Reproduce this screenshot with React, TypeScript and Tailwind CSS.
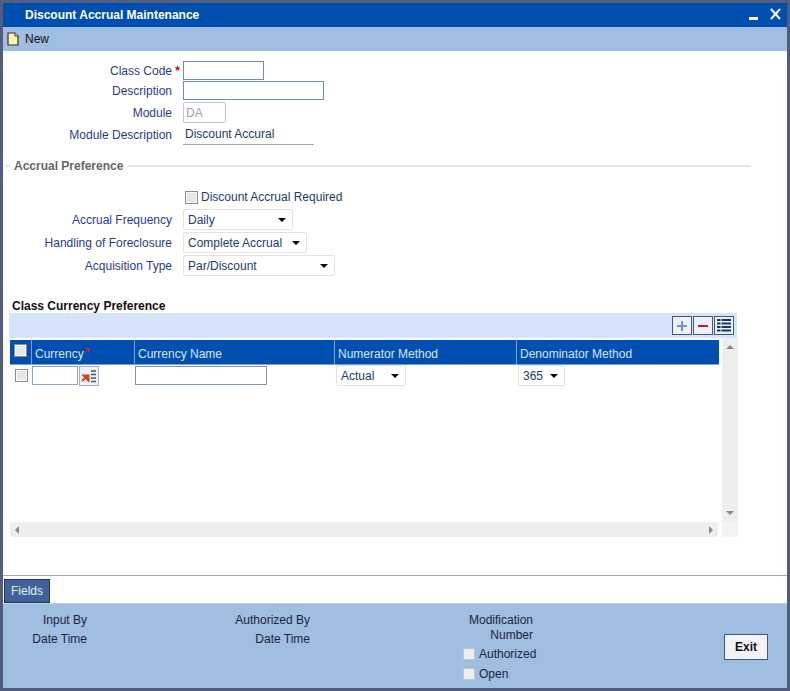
import React from "react";

const font = { fontFamily: '"Liberation Sans", Arial, sans-serif' };

function Caret() {
  return <span className="w-0 h-0 border-l-[4px] border-r-[4px] border-t-[4px] border-l-transparent border-r-transparent border-t-black" />;
}

function Select({ w, text, h = "h-[21px]" }: { w: string; text: string; h?: string }) {
  return (
    <div className={`${w} ${h} flex items-center justify-between pl-[4px] pr-[6px] bg-white border border-[#e3e3e3] rounded-[2px] text-[12px] text-[#1d3a6e]`}>
      <span>{text}</span>
      <Caret />
    </div>
  );
}

function Check({ cls = "" }: { cls?: string }) {
  return <span className={`block w-[13px] h-[13px] border border-[#8b8b8b] bg-[#e6e6e6] shadow-[inset_0_0_0_1px_#fff] ${cls}`} />;
}

function Row({ label, star, mt, children }: { label: string; star?: boolean; mt: string; children: React.ReactNode }) {
  return (
    <div className={`flex items-center ${mt}`}>
      <div className="w-[169px] text-right text-[12px] text-[#2b3a8f] leading-none">{label}</div>
      <div className="w-[11px] text-center text-[#cc0000] text-[12px] font-bold leading-none">{star ? "*" : ""}</div>
      {children}
    </div>
  );
}

function HeadCell({ w, children }: { w: string; children: React.ReactNode }) {
  return <div className={`${w} h-full flex items-center pl-[3px] pt-[3px] border-r border-[#7f9fd0] text-[12px] text-[#d6e6fb]`}>{children}</div>;
}

function LovIcon() {
  return (
    <svg width="20" height="20" viewBox="0 0 20 20">
      <rect x="0.5" y="0.5" width="19" height="19" fill="#f2f2f2" stroke="#9db0c8" />
      <path d="M3 15 L8 10 M4.5 9.5 H9.5 V14.5 Z" stroke="#d8401a" strokeWidth="2" fill="#d8401a" />
      <path d="M12 5 H17 M12 8.5 H17 M12 12 H17 M12 15.5 H17" stroke="#3c5a88" strokeWidth="1.5" />
    </svg>
  );
}

export default function App() {
  return (
    <div style={font} className="w-[790px] h-[691px] border-[3px] border-[#515c7e] bg-white flex flex-col overflow-hidden">
      <div className="h-[24px] shrink-0 bg-[#004fb0] flex items-center pl-[22px] pr-[5px]">
        <span className="text-white text-[12px] font-bold">Discount Accrual Maintenance</span>
        <svg className="ml-auto" width="36" height="16" viewBox="0 0 36 16">
          <rect x="3" y="10" width="9" height="3" fill="#fff" />
          <path d="M25 2 L34 12 M34 2 L25 12" stroke="#fff" strokeWidth="2" />
        </svg>
      </div>
      <div className="h-[24px] shrink-0 bg-[#a0bde2] flex items-center pl-[4px]">
        <svg width="12" height="14" viewBox="0 0 12 14">
          <path d="M1 1 H8 L11 4 V13 H1 Z" fill="#fdf3a6" stroke="#333" strokeWidth="1.2" />
          <path d="M8 1 V4 H11" fill="#fff" stroke="#333" />
        </svg>
        <span className="ml-[6px] text-[12px] text-[#111]">New</span>
      </div>

      <div className="flex-1 flex flex-col">
        <Row label="Class Code" star mt="mt-[10px]">
          <div className="w-[81px] h-[19px] border border-[#6f8fa3]" />
        </Row>
        <Row label="Description" mt="mt-[1px]">
          <div className="w-[141px] h-[19px] border border-[#6f8fa3]" />
        </Row>
        <Row label="Module" mt="mt-[2px]">
          <div className="w-[43px] h-[21px] border border-[#c4c4c4] rounded-[2px] pl-[2px] flex items-center text-[12px] text-[#a0a0a0]">DA</div>
        </Row>
        <Row label="Module Description" mt="mt-[1px]">
          <div className="w-[131px] h-[21px] border-b border-[#aaaaaa] pl-[2px] flex items-center text-[12px] text-[#1d3a6e]">Discount Accural</div>
        </Row>

        <div className="flex items-center mt-[13px] h-[16px] pl-[2px]">
          <span className="w-[5px] h-[2px] bg-[#dfe6f3]" />
          <span className="ml-[4px] text-[12px] font-bold text-[#666666]">Accrual Preference</span>
          <span className="ml-[4px] w-[624px] h-[2px] bg-[#dfe6f3]" />
        </div>

        <div className="flex items-center mt-[14px] ml-[182px]">
          <Check />
          <span className="ml-[3px] text-[12px] text-[#1d3a6e]">Discount Accrual Required</span>
        </div>
        <Row label="Accrual Frequency" mt="mt-[3px]"><Select w="w-[110px]" text="Daily" /></Row>
        <Row label="Handling of Foreclosure" mt="mt-[2px]"><Select w="w-[124px]" text="Complete Accrual" /></Row>
        <Row label="Acquisition Type" mt="mt-[2px]"><Select w="w-[152px]" text="Par/Discount" /></Row>

        <div className="mt-[22px] ml-[9px] h-[15px] flex items-center text-[12px] font-bold text-[#111]">Class Currency Preference</div>
        <div className="ml-[6px] w-[728px] h-[25px] bg-[#d5e4fa] flex items-center justify-end gap-[1px] pr-[3px]">
          <button className="w-[20px] h-[19px] border border-[#44597c] bg-[#eef2f8] flex items-center justify-center">
            <svg width="12" height="12" viewBox="0 0 12 12"><path d="M6 1 V11 M1 6 H11" stroke="#6f93cc" strokeWidth="2" /></svg>
          </button>
          <button className="w-[20px] h-[19px] border border-[#44597c] bg-[#eef2f8] flex items-center justify-center">
            <svg width="12" height="12" viewBox="0 0 12 12"><path d="M1 6 H11" stroke="#c01a2c" strokeWidth="2" /></svg>
          </button>
          <button className="w-[20px] h-[19px] border border-[#44597c] bg-[#eef2f8] flex items-center justify-center">
            <svg width="14" height="13" viewBox="0 0 14 13">
              <path d="M0 1 H14 M0 4.5 H14 M0 8 H14 M0 11.5 H14" stroke="#12386f" strokeWidth="2" />
              <path d="M4 0 V13" stroke="#eef2f8" />
            </svg>
          </button>
        </div>

        <div className="ml-[7px] flex w-[728px]">
          <div className="w-[712px] flex flex-col">
            <div className="h-[184px] pt-[2px]">
              <div className="w-[709px] h-[25px] bg-[#004fb0] border-b border-[#7f9fd0] flex items-stretch">
                <div className="w-[22px] border-r border-[#7f9fd0] flex items-center justify-center"><Check cls="mb-[3px]" /></div>
                <HeadCell w="w-[103px]">Currency<span className="text-[#cc2222] font-bold ml-[1px] -mt-[3px]">*</span></HeadCell>
                <HeadCell w="w-[200px]">Currency Name</HeadCell>
                <HeadCell w="w-[182px]">Numerator Method</HeadCell>
                <div className="flex-1 flex items-center pl-[3px] pt-[3px] text-[12px] text-[#d6e6fb]">Denominator Method</div>
              </div>
              <div className="w-[709px] h-[21px] flex items-center">
                <div className="w-[22px] flex justify-center"><Check /></div>
                <div className="w-[103px] flex items-center">
                  <div className="w-[46px] h-[19px] border border-[#8fa5bd]" />
                  <div className="ml-[1px]"><LovIcon /></div>
                </div>
                <div className="w-[200px]">
                  <div className="w-[132px] h-[19px] border border-[#7f95ae]" />
                </div>
                <div className="w-[182px] pl-[1px]"><Select w="w-[70px]" text="Actual" /></div>
                <div className="pl-[1px]"><Select w="w-[47px]" text="365" /></div>
              </div>
            </div>
            <div className="h-[15px] bg-[#eeeeee] flex items-center justify-between px-[5px] w-[708px]">
              <span className="w-0 h-0 border-y-[4px] border-r-[4px] border-y-transparent border-r-[#8a8a8a]" />
              <span className="w-0 h-0 border-y-[4px] border-l-[4px] border-y-transparent border-l-[#8a8a8a]" />
            </div>
          </div>
          <div className="w-[16px] h-[199px] flex flex-col">
            <div className="h-[184px] bg-[#eeeeee] flex flex-col items-center justify-between pt-[7px] pb-[7px]">
              <span className="w-0 h-0 border-x-[4px] border-b-[4px] border-x-transparent border-b-[#8a8a8a]" />
              <span className="w-0 h-0 border-x-[4px] border-t-[4px] border-x-transparent border-t-[#8a8a8a]" />
            </div>
            <div className="h-[15px] bg-[#f4f4f4]" />
          </div>
        </div>

        <div className="mt-auto h-[28px] border-t border-[#aaa99b] pt-[3px] pl-[1px]">
          <div className="w-[46px] h-[24px] bg-[#3f6399] border border-[#1f3558] flex items-center justify-center text-[12px] text-[#e6eefa]">Fields</div>
        </div>
      </div>

      <div className="h-[85px] shrink-0 bg-[#a0bde2] border-t border-[#c9cfd8] flex text-[12px] text-[#1a2540] leading-none">
        <div className="w-[84px] text-right pt-[10px] flex flex-col gap-[5px]">
          <span className="h-[14px]">Input By</span>
          <span className="h-[14px]">Date Time</span>
        </div>
        <div className="w-[223px] text-right pt-[10px] flex flex-col gap-[5px]">
          <span className="h-[14px]">Authorized By</span>
          <span className="h-[14px]">Date Time</span>
        </div>
        <div className="w-[223px] text-right pt-[10px] flex flex-col">
          <span className="h-[15px]">Modification</span>
          <span className="h-[14px]">Number</span>
          <div className="flex items-center mt-[5px] ml-[153px] text-left">
            <span className="block shrink-0 w-[12px] h-[12px] bg-[#eeeeee] border border-[#bcc6d6]" />
            <span className="ml-[4px]">Authorized</span>
          </div>
          <div className="flex items-center mt-[8px] ml-[153px] text-left">
            <span className="block shrink-0 w-[12px] h-[12px] bg-[#eeeeee] border border-[#bcc6d6]" />
            <span className="ml-[4px]">Open</span>
          </div>
        </div>
        <div className="flex-1 flex justify-end pr-[19px] pt-[30px]">
          <button className="w-[44px] h-[26px] bg-[#f1f3f6] border border-[#44597c] text-[12px] font-bold text-[#111]">Exit</button>
        </div>
      </div>
    </div>
  );
}
